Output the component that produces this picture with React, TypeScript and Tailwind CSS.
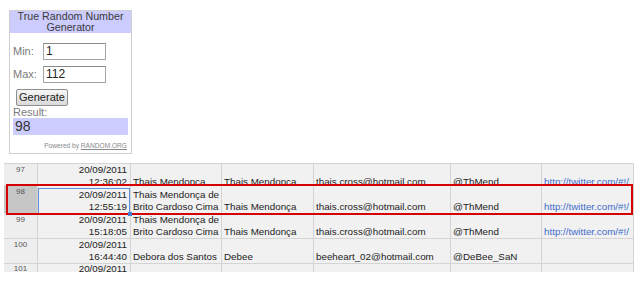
import React from "react";

type Row = {
  n: string;
  date: string[];
  name: string[];
  name2: string;
  email: string;
  tw: string;
  url: string;
  h: string;
  sel?: boolean;
  top?: boolean;
};

const rows: Row[] = [
  { n: "97", date: ["20/09/2011", "12:36:02"], name: ["Thais Mendonça"], name2: "Thais Mendonça", email: "thais.cross@hotmail.com", tw: "@ThMend", url: "http://twitter.com/#!/", h: "h-[22px]", top: true },
  { n: "98", date: ["20/09/2011", "12:55:19"], name: ["Thais Mendonça de", "Brito Cardoso Cima"], name2: "Thais Mendonça", email: "thais.cross@hotmail.com", tw: "@ThMend", url: "http://twitter.com/#!/", h: "h-[28px]", sel: true },
  { n: "99", date: ["20/09/2011", "15:18:05"], name: ["Thais Mendonça de", "Brito Cardoso Cima"], name2: "Thais Mendonça", email: "thais.cross@hotmail.com", tw: "@ThMend", url: "http://twitter.com/#!/", h: "h-[25px]" },
  { n: "100", date: ["20/09/2011", "16:44:40"], name: ["Debora dos Santos"], name2: "Debee", email: "beeheart_02@hotmail.com", tw: "@DeBee_SaN", url: "", h: "h-[25px]" },
];

function Cell({ w, children, right, top }: { w: string; children?: React.ReactNode; right?: boolean; top?: boolean }) {
  return (
    <div
      className={`${w} shrink-0 h-full border-r border-[#d4d4d4] bg-[#f1f1f1] overflow-hidden whitespace-nowrap flex flex-col ${top ? "justify-start" : "justify-end"}`}
    >
      <div className={`min-h-[24px] shrink-0 flex flex-col justify-end ${right ? "items-end pr-[3px]" : "items-start pl-[2px]"}`}>
        {children}
      </div>
    </div>
  );
}

export default function App() {
  return (
    <div className="w-[640px] h-[288px] bg-white overflow-hidden relative" style={{ fontFamily: '"Liberation Sans", Arial, sans-serif' }}>
      {/* Widget */}
      <div className="ml-[9px] mt-[10px] w-[123px] h-[144px] border border-[#cfcfcf] bg-white flex flex-col">
        <div className="h-[22px] bg-[#ccccff] text-[#3a3a3a] text-[10.7px] leading-[11px] text-center">
          True Random Number
          <br />
          Generator
        </div>
        <div className="mt-[10px] flex items-center">
          <span className="pl-[3px] w-[33px] text-[11px] text-[#7a7a7a]">Min:</span>
          <div className="w-[63px] h-[17px] border border-[#a5a5a5] border-t-[#8a8a8a] bg-white text-[12px] leading-[15px] pl-[2px] text-[#222]">1</div>
        </div>
        <div className="mt-[6px] flex items-center">
          <span className="pl-[3px] w-[33px] text-[11px] text-[#7a7a7a]">Max:</span>
          <div className="w-[63px] h-[17px] border border-[#a5a5a5] border-t-[#8a8a8a] bg-white text-[12px] leading-[15px] pl-[2px] text-[#222]">112</div>
        </div>
        <div className="mt-[6px] pl-[6px]">
          <div className="w-[52px] h-[17px] border border-[#8e8e8e] rounded-[2px] bg-gradient-to-b from-[#f6f6f6] to-[#dadada] text-[11px] leading-[15px] text-center text-[#222]">
            Generate
          </div>
        </div>
        <div className="pl-[3px] text-[11px] leading-[12px] text-[#7a7a7a]">Result:</div>
        <div className="ml-[3px] w-[115px] h-[17px] bg-[#ccccff] text-[14px] leading-[17px] pl-[2px] text-[#333]">98</div>
        <div className="mt-[6px] pr-[4px] text-right text-[6.6px] leading-[10px] text-[#8a8a8a]">
          Powered by <span className="underline">RANDOM.ORG</span>
        </div>
      </div>

      {/* Spreadsheet */}
      <div className="ml-[4px] mt-[9px] w-[630px] h-[109px] border-t border-[#d4d4d4] overflow-hidden relative text-[9.8px] leading-[12px] text-[#222]">
        {rows.map((r) => (
          <div key={r.n} className={`${r.h} flex border-b border-[#d4d4d4]`}>
            <div className={`w-[34px] shrink-0 h-full border-r border-[#d4d4d4] ${r.sel ? "bg-[#c6c6c6]" : "bg-[#eeeeee]"} text-center text-[8px] leading-[12px] text-[#555]`}>
              {r.n}
            </div>
            <Cell w="w-[93px]" right top={r.top}>
              {r.date.map((d) => (
                <div key={d}>{d}</div>
              ))}
            </Cell>
            <Cell w="w-[91px]" top={r.top}>
              {r.name.map((d, i) => (
                <div key={i}>{d}</div>
              ))}
            </Cell>
            <Cell w="w-[92px]" top={r.top}>{r.name2}</Cell>
            <Cell w="w-[137px]" top={r.top}>{r.email}</Cell>
            <Cell w="w-[91px]" top={r.top}>{r.tw}</Cell>
            <Cell w="w-[92px]" top={r.top}>
              <span className="text-[#3f6cc9]">{r.url}</span>
            </Cell>
          </div>
        ))}
        {/* row 101, partly visible */}
        <div className="h-[25px] flex">
          <div className="w-[34px] shrink-0 h-full border-r border-[#d4d4d4] bg-[#eeeeee] text-center text-[8px] leading-[10px] text-[#555]">101</div>
          <div className="w-[93px] shrink-0 h-full border-r border-[#d4d4d4] bg-[#f1f1f1] text-right pr-[3px] leading-[10px]">20/09/2011</div>
          <div className="w-[91px] shrink-0 h-full border-r border-[#d4d4d4] bg-[#f1f1f1]" />
          <div className="w-[92px] shrink-0 h-full border-r border-[#d4d4d4] bg-[#f1f1f1]" />
          <div className="w-[137px] shrink-0 h-full border-r border-[#d4d4d4] bg-[#f1f1f1]" />
          <div className="w-[91px] shrink-0 h-full border-r border-[#d4d4d4] bg-[#f1f1f1]" />
          <div className="w-[92px] shrink-0 h-full border-r border-[#d4d4d4] bg-[#f1f1f1]" />
        </div>

        {/* selected cell */}
        <div className="absolute left-[34px] top-[24px] w-[92px] h-[26px] border border-[#5f8fdc]" />
        <div className="absolute left-[124px] top-[48px] w-[4px] h-[4px] bg-[#4a7fd6] z-10" />
        {/* red highlight */}
        <div className="absolute left-[2px] top-[20px] w-[627px] h-[31px] border-2 border-[#d50000]" />
      </div>
    </div>
  );
}
